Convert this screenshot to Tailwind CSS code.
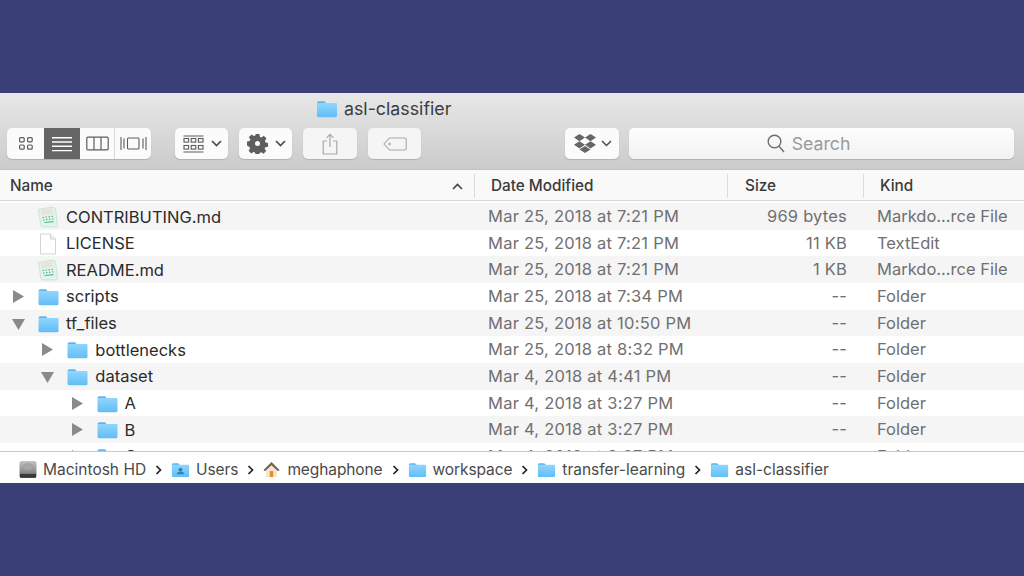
<!DOCTYPE html>
<html lang="en">
<head>
    <meta charset="UTF-8">
    <meta name="viewport" content="width=device-width, initial-scale=1.0">
    <title>asl-classifier</title>
    <script src="https://cdn.jsdelivr.net/npm/@tailwindcss/browser@4"></script>
</head>
<body class="bg-[#3a3f77] h-[576px] overflow-hidden font-['Inter','Liberation_Sans',sans-serif]">
    <!-- shared icons -->
    <svg class="absolute w-0 h-0">
        <defs>
            <linearGradient id="fold" x1="0" y1="0" x2="0" y2="1">
                <stop offset="0" stop-color="#8fd6fd"/>
                <stop offset="1" stop-color="#62bdf6"/>
            </linearGradient>
            <linearGradient id="hd" x1="0" y1="0" x2="0" y2="1">
                <stop offset="0" stop-color="#c4c4c4"/>
                <stop offset=".65" stop-color="#8c8c8c"/>
                <stop offset="1" stop-color="#4a4a4a"/>
            </linearGradient>
        </defs>
        <symbol id="folder" viewBox="0 0 22 18">
            <path d="M1 3.200C1 2 1.700 1.200 3 1.200h4.600c.9 0 1.300.3 1.800 1l.8 1H1z" fill="#5fb6ef"/>
            <path d="M1 4.200c0-.8.5-1.200 1.200-1.200h17.600c.8 0 1.200.5 1.200 1.200v11.600c0 .9-.5 1.400-1.400 1.400H2.400c-.9 0-1.400-.5-1.400-1.400z" fill="url(#fold)"/>
        </symbol>
        <symbol id="mdfile" viewBox="0 0 22 22">
            <path d="M1.500 3.500 15 1l3 1 .8 3 1.700 15c0 .6-.4 1-1 1H5.500c-.8 0-1.400-.4-1.600-1.200z" fill="#e2f3ec" stroke="#bfdcd0" stroke-width=".7"/>
            <path d="M4 3.800 15.500 2.400l.9 5.600L5 9.200z" fill="#e8e4d8"/>
            <path d="M5.500 11.500 7 11.300M8.500 11.200l1.500-.2M11.500 10.900l1.500-.2M14.500 10.500l1.500-.2M6 14l1.500-.2M9 13.700l1.500-.2M12 13.400l1.500-.2M15 13l1.500-.2M7.500 16.500l9-.8" stroke="#55b897" stroke-width="1.200"/>
        </symbol>
        <symbol id="blank" viewBox="0 0 18 22">
            <path d="M1.500 1h10l5 5v15h-15z" fill="#fff" stroke="#d4d4d4"/>
            <path d="M11.500 1v5h5" fill="#efefef" stroke="#d4d4d4"/>
        </symbol>
    </svg>

    <div class="h-[93px]"></div>
    <div class="h-[390px] flex flex-col bg-white overflow-hidden">
        <!-- toolbar -->
        <div class="h-[77px] shrink-0 bg-gradient-to-b from-[#e8e8e8] to-[#cbcbcb] border-b border-[#c2c2c2]">
            <div class="h-[35px] flex items-center pl-[316px] gap-[6px] pb-[3px]">
                <svg class="w-[22px] h-[18px]"><use href="#folder"/></svg>
                <span class="text-[17.800px] text-[#3c3c3c] leading-none">asl-classifier</span>
            </div>
            <div class="flex items-center h-[31px] pl-[7px] text-[#5c5c5c]">
                <div class="flex w-[144px] h-[31px] rounded-[5px] bg-[#fbfbfb] shadow-[0_1px_1px_#b0b0b0] overflow-hidden">
                    <div class="w-[37px] flex items-center justify-center">
                        <svg width="16" height="15" viewBox="0 0 16 15" fill="none" stroke="#5c5c5c" stroke-width="1.200"><rect x="1.600" y="1.600" width="4.600" height="4.200" rx="1"/><rect x="9.600" y="1.600" width="4.600" height="4.200" rx="1"/><rect x="1.600" y="9" width="4.600" height="4.200" rx="1"/><rect x="9.600" y="9" width="4.600" height="4.200" rx="1"/></svg>
                    </div>
                    <div class="w-[36px] bg-[#666666] flex items-center justify-center">
                        <svg width="22" height="16" viewBox="0 0 22 16" fill="none" stroke="#fff" stroke-width="1.400"><path d="M1 1.700h20M1 6h20M1 10.300h20M1 14.600h20"/></svg>
                    </div>
                    <div class="w-[35px] flex items-center justify-center border-r border-[#d9d9d9]">
                        <svg width="23" height="15" viewBox="0 0 23 15" fill="none" stroke="#5c5c5c" stroke-width="1.200"><rect x=".8" y="1.200" width="21.400" height="12.600" rx="1"/><path d="M8 1.200v12.600M15 1.200v12.600"/></svg>
                    </div>
                    <div class="flex-1 flex items-center justify-center">
                        <svg width="27" height="15" viewBox="0 0 27 15" fill="none" stroke="#5c5c5c" stroke-width="1.100"><rect x="7.500" y="2" width="11.500" height="11" rx="1"/><path d="M1 1v13M4 2.500v10M23 2.500v10M26 1v13"/></svg>
                    </div>
                </div>
                <div class="ml-[24px] w-[53px] h-[31px] rounded-[5px] bg-[#fbfbfb] shadow-[0_1px_1px_#b0b0b0] flex items-center pl-[8px] gap-[7px]">
                    <svg width="21" height="18" viewBox="0 0 21 18" fill="none" stroke="#5c5c5c" stroke-width="1.100"><path d="M.5 1h20M.5 17h20"/><rect x="1" y="3.500" width="4.600" height="3.600"/><rect x="8.200" y="3.500" width="4.600" height="3.600"/><rect x="15.400" y="3.500" width="4.600" height="3.600"/><rect x="1" y="10.500" width="4.600" height="3.600"/><rect x="8.200" y="10.500" width="4.600" height="3.600"/><rect x="15.400" y="10.500" width="4.600" height="3.600"/></svg>
                    <svg width="11" height="7" viewBox="0 0 11 7" fill="none" stroke="#4c4c4c" stroke-width="1.700"><path d="m1 1 4.500 4.500L10 1"/></svg>
                </div>
                <div class="ml-[11px] w-[53px] h-[31px] rounded-[5px] bg-[#fbfbfb] shadow-[0_1px_1px_#b0b0b0] flex items-center pl-[8px] gap-[7px]">
                    <svg width="21" height="21" viewBox="0 0 21 21"><path fill="#5e5e5e" fill-rule="evenodd" d="M8.600 1h3.800l.5 2.700 1.600.7 2.300-1.600 2.700 2.700-1.600 2.300.7 1.600 2.400.5v3.800l-2.700.5-.7 1.600 1.600 2.300-2.700 2.700-2.300-1.600-1.600.7-.5 2.400H8.600l-.5-2.700-1.600-.7-2.300 1.600-2.700-2.700 1.600-2.300-.7-1.600L0 12.400V8.600l2.700-.5.7-1.600-1.600-2.300 2.700-2.700 2.300 1.600 1.600-.7zM10.500 8a2.500 2.500 0 1 0 0 5 2.500 2.500 0 0 0 0-5z"/></svg>
                    <svg width="11" height="7" viewBox="0 0 11 7" fill="none" stroke="#4c4c4c" stroke-width="1.700"><path d="m1 1 4.500 4.500L10 1"/></svg>
                </div>
                <div class="ml-[11px] w-[54px] h-[31px] rounded-[5px] bg-[#f5f5f5] shadow-[0_1px_1px_#b0b0b0] flex items-center justify-center">
                    <svg width="16" height="22" viewBox="0 0 16 22" fill="none" stroke="#a8a8a8" stroke-width="1.200"><path d="M5 8H1.200v13h13.600V8H11M8 14V1.500M4.600 4.800 8 1.400l3.400 3.400"/></svg>
                </div>
                <div class="ml-[11px] w-[53px] h-[31px] rounded-[5px] bg-[#f5f5f5] shadow-[0_1px_1px_#b0b0b0] flex items-center justify-center">
                    <svg width="24" height="14" viewBox="0 0 24 14" fill="none" stroke="#a8a8a8" stroke-width="1.100"><path d="M6.500 1H22a1.200 1.200 0 0 1 1.200 1.200v9.600A1.200 1.200 0 0 1 22 13H6.500L1 7z"/><circle cx="6.500" cy="7" r=".7" fill="#a8a8a8"/></svg>
                </div>
                <div class="ml-[144px] w-[54px] h-[31px] rounded-[5px] bg-[#fbfbfb] shadow-[0_1px_1px_#b0b0b0] flex items-center pl-[8px] gap-[4px]">
                    <svg width="24" height="21" viewBox="0 0 24 21" fill="#666"><path d="M6.500 1 12 4.600 6.500 8.200 1 4.600zM17.500 1 23 4.600l-5.500 3.600L12 4.600zM6.500 8.200 12 11.800l-5.500 3.600L1 11.800zM17.500 8.200l5.500 3.600-5.500 3.600-5.500-3.600zM12 13l5.500 3.500L12 20l-5.500-3.500z"/></svg>
                    <svg width="11" height="7" viewBox="0 0 11 7" fill="none" stroke="#4c4c4c" stroke-width="1.500"><path d="m1 1 4.500 4.500L10 1"/></svg>
                </div>
                <div class="ml-[10px] w-[385px] h-[31px] rounded-[5px] bg-gradient-to-b from-[#fdfdfd] to-[#f2f2f2] shadow-[0_1px_1px_#b0b0b0] flex items-center justify-center gap-[7px] pr-[26px]">
                    <svg width="18" height="19" viewBox="0 0 18 19" fill="none" stroke="#6e6e6e" stroke-width="1.400"><circle cx="7.500" cy="7.500" r="6.300"/><path d="m12 12.300 5 5.700"/></svg>
                    <span class="text-[17.700px] text-[#9a9a9a] leading-none">Search</span>
                </div>
            </div>
        </div>

        <!-- column headers -->
        <div class="h-[31px] shrink-0 flex items-center pt-[2px] bg-[#f9f9f9] border-b border-[#d8d8d8] text-[15.300px] font-medium text-[#3a3a3a]">
            <div class="w-[475px] h-[24px] shrink-0 flex items-center justify-between pl-[10px] pr-[11px] border-r border-[#dcdcdc]">
                <span>Name</span>
                <svg width="11" height="7" viewBox="0 0 11 7" fill="none" stroke="#444" stroke-width="1.600"><path d="m1 6 4.500-4.500L10 6"/></svg>
            </div>
            <div class="w-[253px] h-[24px] shrink-0 flex items-center pl-[16px] border-r border-[#dcdcdc]">Date Modified</div>
            <div class="w-[136px] h-[24px] shrink-0 flex items-center pl-[17px] border-r border-[#dcdcdc]">Size</div>
            <div class="pl-[16px]">Kind</div>
        </div>

        <!-- file rows -->
        <div id="rows" class="flex-1 min-h-0 overflow-hidden pt-[2px]"></div>

        <!-- path bar -->
        <div class="h-[32px] shrink-0 bg-white border-t border-[#c9c9c9] flex items-center pt-[4px] pl-[19px] text-[15.500px] text-[#4a4a4a] leading-none">
            <svg class="mr-[6px]" width="18" height="19" viewBox="0 0 18 19"><rect x=".5" y="1" width="17" height="17" rx="2" fill="url(#hd)"/><ellipse cx="9" cy="6.500" rx="5.500" ry="3.500" fill="#a5a5a5"/><rect x="1" y="14" width="16" height="3.500" fill="#3a3a3a"/></svg>
            <span>Macintosh HD</span>
            <svg class="mx-[9px]" width="7" height="10" viewBox="0 0 7 10" fill="none" stroke="#222" stroke-width="1.700"><path d="m1.500 1 4 4-4 4"/></svg>
            <svg class="mr-[6px]" width="19" height="16" viewBox="0 0 22 18"><use href="#folder"/><circle cx="11" cy="8.500" r="2.200" fill="#2f7fc4"/><path d="M6.500 14c.5-2.500 2.500-3.300 4.500-3.300s4 .8 4.500 3.300z" fill="#2f7fc4"/></svg>
            <span class="tracking-[-0.1px]">Users</span>
            <svg class="mx-[9px]" width="7" height="10" viewBox="0 0 7 10" fill="none" stroke="#222" stroke-width="1.700"><path d="m1.500 1 4 4-4 4"/></svg>
            <svg class="mr-[7px]" width="17" height="17" viewBox="0 0 17 17"><path d="M3 7.500 8.500 3 14 7.500V16H3z" fill="#f1e6d2"/><path d="M6.800 10h3.400v6H6.800z" fill="#e58f1e"/><path d="M.5 9 8.500 1l8 8-1.400 1.300-6.600-6.100-6.600 6.100z" fill="#7c5f50"/></svg>
            <span class="tracking-[-0.1px]">meghaphone</span>
            <svg class="mx-[9px]" width="7" height="10" viewBox="0 0 7 10" fill="none" stroke="#222" stroke-width="1.700"><path d="m1.500 1 4 4-4 4"/></svg>
            <svg class="mr-[6px]" width="19" height="16"><use href="#folder"/></svg>
            <span class="tracking-[-0.1px]">workspace</span>
            <svg class="mx-[9px]" width="7" height="10" viewBox="0 0 7 10" fill="none" stroke="#222" stroke-width="1.700"><path d="m1.500 1 4 4-4 4"/></svg>
            <svg class="mr-[6px]" width="19" height="16"><use href="#folder"/></svg>
            <span>transfer-learning</span>
            <svg class="mx-[9px]" width="7" height="10" viewBox="0 0 7 10" fill="none" stroke="#222" stroke-width="1.700"><path d="m1.500 1 4 4-4 4"/></svg>
            <svg class="mr-[6px]" width="19" height="16"><use href="#folder"/></svg>
            <span>asl-classifier</span>
        </div>
    </div>

    <script>
        const files = [
            { name: 'CONTRIBUTING.md', date: 'Mar 25, 2018 at 7:21 PM', size: '969 bytes', kind: 'Markdo...rce File', icon: 'md', depth: 0 },
            { name: 'LICENSE', date: 'Mar 25, 2018 at 7:21 PM', size: '11 KB', kind: 'TextEdit', icon: 'blank', depth: 0 },
            { name: 'README.md', date: 'Mar 25, 2018 at 7:21 PM', size: '1 KB', kind: 'Markdo...rce File', icon: 'md', depth: 0 },
            { name: 'scripts', date: 'Mar 25, 2018 at 7:34 PM', size: '--', kind: 'Folder', icon: 'folder', arrow: 'right', depth: 0 },
            { name: 'tf_files', date: 'Mar 25, 2018 at 10:50 PM', size: '--', kind: 'Folder', icon: 'folder', arrow: 'down', depth: 0 },
            { name: 'bottlenecks', date: 'Mar 25, 2018 at 8:32 PM', size: '--', kind: 'Folder', icon: 'folder', arrow: 'right', depth: 1 },
            { name: 'dataset', date: 'Mar 4, 2018 at 4:41 PM', size: '--', kind: 'Folder', icon: 'folder', arrow: 'down', depth: 1 },
            { name: 'A', date: 'Mar 4, 2018 at 3:27 PM', size: '--', kind: 'Folder', icon: 'folder', arrow: 'right', depth: 2 },
            { name: 'B', date: 'Mar 4, 2018 at 3:27 PM', size: '--', kind: 'Folder', icon: 'folder', arrow: 'right', depth: 2 },
            { name: 'C', date: 'Mar 4, 2018 at 3:27 PM', size: '--', kind: 'Folder', icon: 'folder', arrow: 'right', depth: 2 }
        ];

        const arrows = {
            right: '<svg class="absolute left-[13px] top-[7px]" width="11" height="13" viewBox="0 0 11 13"><path d="M0 0l11 6.500L0 13z" fill="#8a8a8a"/></svg>',
            down: '<svg class="absolute left-[12px] top-[9px]" width="13" height="11" viewBox="0 0 13 11"><path d="M0 0h13L6.500 11z" fill="#8a8a8a"/></svg>'
        };
        const icons = {
            md: '<svg class="absolute left-[37px] top-[3px]" width="22" height="22"><use href="#mdfile"/></svg>',
            blank: '<svg class="absolute left-[39px] top-[3px]" width="18" height="22"><use href="#blank"/></svg>',
            folder: '<svg class="absolute left-[37px] top-[5px]" width="23" height="18" viewBox="0 0 22 18"><use href="#folder"/></svg>'
        };

        document.getElementById('rows').innerHTML = files.map((f, i) => {
            const shade = i % 2 === 0 ? 'bg-[#f5f5f5]' : 'bg-white';
            const offset = f.depth * 29.3;
            return `<div class="h-[26.67px] flex items-center text-[16.500px] leading-none ${shade}">
                <div class="relative w-[488px] h-full shrink-0">
                    <div class="absolute top-0 h-full w-[70px]" style="left:${offset}px">
                        ${f.arrow ? arrows[f.arrow] : ''}
                        ${icons[f.icon]}
                    </div>
                    <span class="absolute top-[5.500px] text-[#2b2b2b]" style="left:${66 + offset}px">${f.name}</span>
                </div>
                <div class="w-[270px] shrink-0 text-[#707070] tracking-[0.23px]">${f.date}</div>
                <div class="w-[89px] shrink-0 text-right text-[#707070] tracking-[0.2px]">${f.size}</div>
                <div class="pl-[30px] text-[#707070] whitespace-nowrap">${f.kind}</div>
            </div>`;
        }).join('');
    </script>
</body>
</html>
